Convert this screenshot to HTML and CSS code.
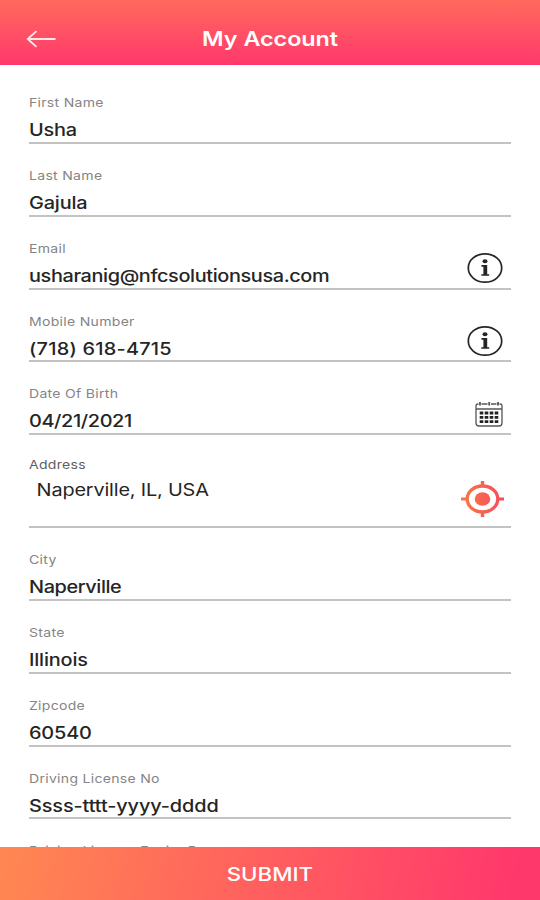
FILE: index.html
```html
<!DOCTYPE html>
<html lang="en">
<head>
<meta charset="utf-8">
<title>My Account</title>
<link rel="stylesheet" href="styles.css">
</head>
<body>
<header class="topbar">
  <svg class="back" width="30" height="18" viewBox="0 0 30 18"><path d="M10.500 1.2 1.700 9l8.800 7.800M1.700 9H29.500"/></svg>
  <h1><span class="wide">My Account</span></h1>
</header>
<main class="form">
  <div class="field">
    <label class="wide">First Name</label>
    <div class="value wide">Usha</div>
  </div>
  <div class="field">
    <label class="wide">Last Name</label>
    <div class="value wide">Gajula</div>
  </div>
  <div class="field">
    <label class="wide">Email</label>
    <div class="value wide email">usharanig@nfcsolutionsusa.com</div>
    <svg class="icon info" width="36" height="32" viewBox="0 0 36 32"><ellipse cx="18" cy="16" rx="16.700" ry="14.200"/><ellipse class="solid" cx="18" cy="9.300" rx="2.500" ry="2"/><path class="solid" d="M14.500 13h5.700v9.200h2v1.600h-7.900v-1.600h2.100v-7.500h-1.900z"/></svg>
  </div>
  <div class="field">
    <label class="wide">Mobile Number</label>
    <div class="value wide phone">(718) 618-4715</div>
    <svg class="icon info" width="36" height="32" viewBox="0 0 36 32"><ellipse cx="18" cy="16" rx="16.700" ry="14.200"/><ellipse class="solid" cx="18" cy="9.300" rx="2.500" ry="2"/><path class="solid" d="M14.500 13h5.700v9.200h2v1.600h-7.900v-1.600h2.100v-7.500h-1.900z"/></svg>
  </div>
  <div class="field">
    <label class="wide">Date Of Birth</label>
    <div class="value wide date">04/21/2021</div>
    <svg class="icon calendar" width="28" height="26" viewBox="0 0 28 26">
      <path d="M3.500 3H3Q1 3 1 5v17q0 3 3 3h20q3 0 3-3V5q0-2-2-2h-.5M6.500 3h6M16 3h5.500M1 8h26"/>
      <path class="rings" d="M5 1v3.500M14.200 1v3.500M23 1v3.500"/>
      <path class="days" d="M4.700 12h19M4.700 16.300h19M4.700 20.600h19"/>
    </svg>
  </div>
  <div class="field address">
    <label class="wide">Address</label>
    <div class="value wide">Naperville, IL, USA</div>
    <svg class="icon locate" width="43" height="36" viewBox="0 0 43 36">
      <defs><linearGradient id="warm" x1="0" y1="0" x2="43" y2="0" gradientUnits="userSpaceOnUse"><stop offset="0" stop-color="#f97843"/><stop offset="1" stop-color="#f64c60"/></linearGradient></defs>
      <ellipse class="ring" cx="21.500" cy="18" rx="15.300" ry="13"/>
      <ellipse class="dot" cx="21.500" cy="18" rx="7.800" ry="6.700"/>
      <path class="ticks" d="M19.800 0h3.400v6h-3.400zM19.800 30h3.400v6h-3.400zM0 16.600h7v2.800H0zM36 16.600h7v2.800h-7z"/>
    </svg>
  </div>
  <div class="field">
    <label class="wide">City</label>
    <div class="value wide city">Naperville</div>
  </div>
  <div class="field">
    <label class="wide">State</label>
    <div class="value wide">Illinois</div>
  </div>
  <div class="field">
    <label class="wide">Zipcode</label>
    <div class="value wide">60540</div>
  </div>
  <div class="field">
    <label class="wide">Driving License No</label>
    <div class="value wide license">Ssss-tttt-yyyy-dddd</div>
  </div>
  <div class="field">
    <label class="wide">Driving License Expiry D</label>
  </div>
</main>
<button class="submit"><span class="wide">SUBMIT</span></button>
</body>
</html>
```

FILE: styles.css
```css
* { box-sizing: border-box; }
body {
  margin: 0;
  height: 900px;
  display: flex;
  flex-direction: column;
  overflow: hidden;
  background: #fff;
  color: #252525;
  font-family: Inter, "Liberation Sans", sans-serif;
}

/* extended letterforms */
.wide { transform: scaleX(1.17); transform-origin: left center; white-space: nowrap; }

.topbar {
  flex: none;
  height: 65px;
  padding: 12px 26px 0;
  display: grid;
  grid-template-columns: 30px 1fr 30px;
  align-items: center;
  background: linear-gradient(#ff6a5d, #ff386c);
  color: #fff;
}
.topbar h1 { margin: 0; font-size: 20px; line-height: 28px; font-weight: 600; text-align: center; letter-spacing: -.05px; }
.topbar .wide, .submit .wide { display: inline-block; transform-origin: center; }
.back { fill: none; stroke: #ffe9e9; stroke-width: 1.8; }

.form { flex: 1; min-height: 0; overflow: hidden; padding: 6.2px 29px 0; }
.field {
  height: 72.8px;
  padding-top: 24px;
  display: grid;
  grid-template-columns: 1fr auto;
  grid-template-rows: 16px 22px;
  row-gap: 8px;
  border-bottom: 2px solid #c3c3c3;
}
.field label { grid-column: 1; font-size: 12px; line-height: 16px; color: #858585; letter-spacing: .25px; }
.value { grid-column: 1; font-size: 17px; line-height: 22px; font-weight: 450; letter-spacing: -.15px; }
.email { letter-spacing: -.33px; }
.phone { letter-spacing: .2px; }
.date { letter-spacing: -.33px; }
.city { letter-spacing: -.35px; }
.license { letter-spacing: -.1px; }
.icon { grid-column: 2; grid-row: 1 / 3; align-self: end; }
.info { margin: 0 8px 3px 0; fill: none; stroke: #252525; stroke-width: 1.7; }
.info .solid { fill: #252525; stroke: none; }
.calendar { margin: 0 8px 5px 0; fill: none; stroke: #555; stroke-width: 1.3; }
.calendar .rings { stroke-width: 1.8; }
.calendar .days { stroke: #222; stroke-width: 2.8; stroke-dasharray: 3.6 1.4; }

.address { height: 93px; padding-top: 22px; row-gap: 6px; }
.address label { color: #606060; }
.address .value { padding-left: 6.5px; font-weight: 400; }
.locate { margin: 0 7px -16px 0; }
.locate .ring { fill: none; stroke: url(#warm); stroke-width: 3.3; }
.locate .dot, .locate .ticks { fill: url(#warm); }

.submit {
  flex: none;
  height: 53px;
  border: 0;
  padding: 2px 0 0;
  background: linear-gradient(100deg, #ff8852, #ff5e5f 50%, #ff386c 95%);
  color: #fff;
  font: 500 19px/24px Inter, "Liberation Sans", sans-serif;
}
```
